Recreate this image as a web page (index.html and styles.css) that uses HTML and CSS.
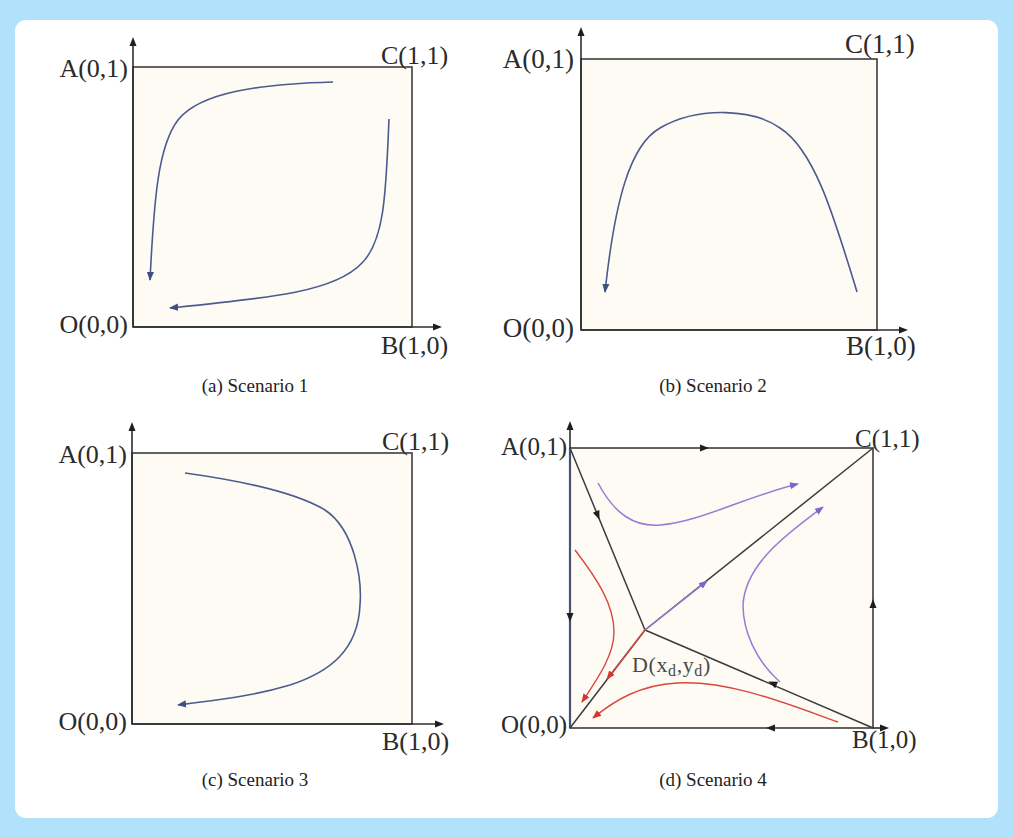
FILE: index.html
```html
<!DOCTYPE html>
<html lang="en">
<head>
<meta charset="utf-8">
<title>Evolutionary phase diagrams</title>
<link rel="stylesheet" href="styles.css">
</head>
<body>
<div class="card">
  <div class="grid">
    <figure class="fig fig-top">
      <svg class="plot" viewBox="50 24 410 340" width="410" height="340">
        <defs>
          <marker id="ma" viewBox="0 0 10 10" refX="9" refY="5" markerWidth="9" markerHeight="9" markerUnits="userSpaceOnUse" orient="auto"><path d="M0,1 L10,5 L0,9 z" class="head-blue"/></marker>
        </defs>
        <rect class="box" x="133" y="67" width="279" height="260"/>
        <line class="axis" x1="133" y1="327" x2="133" y2="44"/>
        <line class="axis" x1="133" y1="327" x2="436" y2="327"/>
        <path class="head-axis" d="M133,37 L136.5,46 L129.5,46 z"/>
        <path class="head-axis" d="M442,327 L433,323.5 L433,330.5 z"/>
        <path class="curve-blue" marker-end="url(#ma)" d="M333,82 C260,84 200,92 178,120 C158,146 154,200 150,280"/>
        <path class="curve-blue" marker-end="url(#ma)" d="M389,119 C386,190 385,240 362,263 C335,292 270,298 170,308"/>
        <text class="lbl" x="128" y="77" text-anchor="end">A(0,1)</text>
        <text class="lbl" x="381" y="64">C(1,1)</text>
        <text class="lbl" x="128" y="333" text-anchor="end">O(0,0)</text>
        <text class="lbl" x="381" y="354">B(1,0)</text>
      </svg>
      <figcaption>(a) Scenario 1</figcaption>
    </figure>

    <figure class="fig fig-top fig-wide">
      <svg class="plot" viewBox="495 24 436 340" width="436" height="340">
        <defs>
          <marker id="mb" viewBox="0 0 10 10" refX="9" refY="5" markerWidth="9" markerHeight="9" markerUnits="userSpaceOnUse" orient="auto"><path d="M0,1 L10,5 L0,9 z" class="head-blue"/></marker>
        </defs>
        <rect class="box" x="581" y="59" width="296" height="271"/>
        <line class="axis" x1="581" y1="330" x2="581" y2="34"/>
        <line class="axis" x1="581" y1="330" x2="901" y2="330"/>
        <path class="head-axis" d="M581,27 L584.5,36 L577.5,36 z"/>
        <path class="head-axis" d="M908,330 L899,326.5 L899,333.5 z"/>
        <path class="curve-blue" marker-end="url(#mb)" d="M857,292 C835,220 815,150 780,128 C755,110 700,105 660,128 C630,145 615,200 605,292"/>
        <text class="lbl lbl-b" x="574" y="68" text-anchor="end">A(0,1)</text>
        <text class="lbl lbl-b" x="845" y="53">C(1,1)</text>
        <text class="lbl lbl-b" x="574" y="337" text-anchor="end">O(0,0)</text>
        <text class="lbl lbl-b" x="846" y="355">B(1,0)</text>
      </svg>
      <figcaption>(b) Scenario 2</figcaption>
    </figure>

    <figure class="fig fig-low">
      <svg class="plot" viewBox="50 415 410 340" width="410" height="340">
        <defs>
          <marker id="mc" viewBox="0 0 10 10" refX="9" refY="5" markerWidth="9" markerHeight="9" markerUnits="userSpaceOnUse" orient="auto"><path d="M0,1 L10,5 L0,9 z" class="head-blue"/></marker>
        </defs>
        <rect class="box" x="132" y="453" width="280" height="271"/>
        <line class="axis" x1="132" y1="724" x2="132" y2="429"/>
        <line class="axis" x1="132" y1="724" x2="437" y2="724"/>
        <path class="head-axis" d="M132,422 L135.5,431 L128.5,431 z"/>
        <path class="head-axis" d="M444,724 L435,720.5 L435,727.5 z"/>
        <path class="curve-blue" marker-end="url(#mc)" d="M185,473 C250,482 300,495 325,510 C355,530 362,580 360,605 C358,650 330,672 290,685 C250,697 215,700 178,705"/>
        <text class="lbl" x="127" y="463" text-anchor="end">A(0,1)</text>
        <text class="lbl" x="382" y="450">C(1,1)</text>
        <text class="lbl" x="127" y="730" text-anchor="end">O(0,0)</text>
        <text class="lbl" x="382" y="750">B(1,0)</text>
      </svg>
      <figcaption>(c) Scenario 3</figcaption>
    </figure>

    <figure class="fig fig-low fig-wide">
      <svg class="plot" viewBox="495 415 436 340" width="436" height="340">
        <defs>
          <marker id="mr" viewBox="0 0 10 10" refX="9" refY="5" markerWidth="9" markerHeight="9" markerUnits="userSpaceOnUse" orient="auto"><path d="M0,1 L10,5 L0,9 z" class="head-red"/></marker>
          <marker id="mp" viewBox="0 0 10 10" refX="9" refY="5" markerWidth="9" markerHeight="9" markerUnits="userSpaceOnUse" orient="auto"><path d="M0,1 L10,5 L0,9 z" class="head-purple"/></marker>
        </defs>
        <rect class="box" x="570" y="448" width="303" height="280"/>
        <line class="edge-left" x1="570" y1="448" x2="570" y2="728"/>
        <line class="axis" x1="570" y1="448" x2="570" y2="428"/>
        <line class="axis" x1="873" y1="728" x2="882" y2="728"/>
        <path class="head-axis" d="M570,421 L573.5,430 L566.5,430 z"/>
        <path class="head-axis" d="M889,728 L880,724.5 L880,731.5 z"/>

        <line class="sep" x1="570" y1="448" x2="645" y2="630"/>
        <line class="sep" x1="873" y1="728" x2="645" y2="630"/>
        <line class="sep" x1="570" y1="728" x2="645" y2="630"/>
        <line class="sep" x1="645" y1="630" x2="873" y2="448"/>

        <path class="head-dark" d="M-5,-3.5 L4,0 L-5,3.5 z" transform="translate(705,448)"/>
        <path class="head-dark" d="M-5,-3.5 L4,0 L-5,3.5 z" transform="translate(873,603) rotate(-90)"/>
        <path class="head-dark" d="M-5,-3.5 L4,0 L-5,3.5 z" transform="translate(770,728) rotate(180)"/>
        <path class="head-dark" d="M-5,-3.5 L4,0 L-5,3.5 z" transform="translate(570,618) rotate(90)"/>
        <path class="head-dark" d="M-5,-3.5 L4,0 L-5,3.5 z" transform="translate(598,516) rotate(67.6)"/>
        <path class="head-dark" d="M-5,-3.5 L4,0 L-5,3.5 z" transform="translate(772,683) rotate(203.3)"/>

        <path class="curve-purple" marker-end="url(#mp)" d="M645,630 L707,581"/>
        <path class="curve-red" marker-end="url(#mr)" d="M645,630 L607,679"/>

        <path class="curve-purple" marker-end="url(#mp)" d="M598,483 C615,515 635,527 660,525 C700,522 750,495 798,484"/>
        <path class="curve-purple" marker-end="url(#mp)" d="M780,682 C755,660 743,630 743,605 C745,565 785,535 823,507"/>
        <path class="curve-red" marker-end="url(#mr)" d="M575,550 C598,580 614,605 614,632 C614,655 598,678 582,702"/>
        <path class="curve-red" marker-end="url(#mr)" d="M838,722 C790,705 730,680 677,683 C640,685 615,700 593,718"/>

        <text class="dlbl" x="632" y="672">D(x<tspan class="sub" dy="4">d</tspan><tspan dy="-4">,y</tspan><tspan class="sub" dy="4">d</tspan><tspan dy="-4">)</tspan></text>

        <text class="lbl lbl-d" x="567" y="455" text-anchor="end">A(0,1)</text>
        <text class="lbl lbl-d" x="855" y="447">C(1,1)</text>
        <text class="lbl lbl-d" x="567" y="733" text-anchor="end">O(0,0)</text>
        <text class="lbl lbl-d" x="852" y="748">B(1,0)</text>
      </svg>
      <figcaption>(d) Scenario 4</figcaption>
    </figure>
  </div>
</div>
</body>
</html>
```

FILE: styles.css
```css
html, body {
  margin: 0;
  padding: 0;
}

body {
  background: #b2e1fc;
  width: 1013px;
  height: 838px;
  overflow: hidden;
  font-family: "Liberation Serif", "Times New Roman", serif;
}

.card {
  box-sizing: border-box;
  margin: 20px 0 0 15px;
  width: 983px;
  height: 798px;
  background: #ffffff;
  border-radius: 11px;
  padding: 4px 0 0 35px;
}

.grid {
  display: grid;
  grid-template-columns: 445px 436px;
  row-gap: 19px;
}

.fig {
  margin: 0;
  width: 410px;
  display: flex;
  flex-direction: column;
}

.fig-wide {
  width: 436px;
}

.plot {
  display: block;
  overflow: visible;
}

figcaption {
  text-align: center;
  font-family: "Liberation Serif", "Times New Roman", serif;
  font-size: 19px;
  line-height: 20px;
  color: #222;
}

.fig-top figcaption {
  margin-top: 12px;
}

.fig-low figcaption {
  margin-top: 15px;
}

.box {
  fill: #fdfbf4;
  stroke: #3d3d3d;
  stroke-width: 1.6;
}

.axis {
  stroke: #2e2e2e;
  stroke-width: 1.6;
}

.edge-left {
  stroke: #46536e;
  stroke-width: 2.2;
}

.head-axis,
.head-dark {
  fill: #1f1f1f;
}

.sep {
  stroke: #3b3b3b;
  stroke-width: 1.5;
}

.curve-blue {
  fill: none;
  stroke: #4b5b8c;
  stroke-width: 1.6;
}

.head-blue {
  fill: #3e4f82;
}

.curve-red {
  fill: none;
  stroke: #d9473d;
  stroke-width: 1.4;
}

.head-red {
  fill: #d8342c;
}

.curve-purple {
  fill: none;
  stroke: #9a7ad4;
  stroke-width: 1.5;
}

.head-purple {
  fill: #8462cc;
}

.lbl {
  font-family: "Liberation Serif", "Times New Roman", serif;
  font-size: 26px;
  fill: #2a2a2a;
}

.lbl-b {
  font-size: 27px;
}

.lbl-d {
  font-size: 25px;
}

.dlbl {
  font-family: "Liberation Serif", "Times New Roman", serif;
  font-size: 22px;
  letter-spacing: 0.6px;
  fill: #4a4a4a;
}

.sub {
  font-size: 16px;
}
```
